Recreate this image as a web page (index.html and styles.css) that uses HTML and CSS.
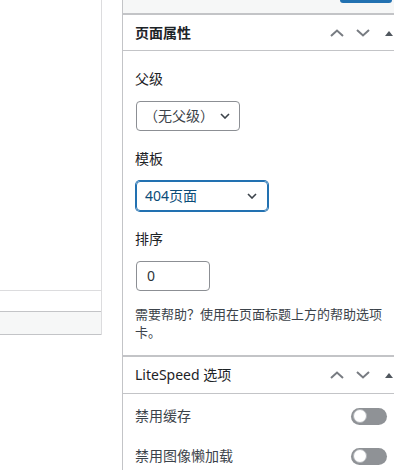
FILE: index.html
```html
<!DOCTYPE html>
<html lang="zh-CN">
<head>
<meta charset="utf-8">
<title>页面属性</title>
<link rel="stylesheet" href="styles.css">
</head>
<body>
<div class="page">
  <div class="editor">
    <div class="editor-main"></div>
    <div class="editor-row"></div>
    <div class="editor-foot"></div>
  </div>
  <div class="gutter"></div>
  <aside class="sidebar">
    <div class="top">
      <span class="publish"></span>
    </div>

    <section class="panel">
      <header class="panel-head">
        <h2 class="panel-title">页面属性</h2>
        <div class="head-tools">
          <span class="tool"><svg width="14" height="8" viewBox="0 0 14 8"><polyline points="1,7 7,1.5 13,7" fill="none" stroke="#787c82" stroke-width="2"/></svg></span>
          <span class="tool"><svg width="14" height="8" viewBox="0 0 14 8"><polyline points="1,1 7,6.5 13,1" fill="none" stroke="#787c82" stroke-width="2"/></svg></span>
          <span class="tool"><svg width="10" height="6" viewBox="0 0 10 6"><polygon points="1,6 5,1 9,6" fill="#50575e"/></svg></span>
        </div>
      </header>
      <div class="panel-body">
        <div class="field">
          <div class="label">父级</div>
          <div class="select select-parent">
            <span class="select-text">（无父级）</span>
            <svg class="chev" width="10" height="6" viewBox="0 0 10 6"><polyline points="1,1 5,5 9,1" fill="none" stroke="#3c434a" stroke-width="1.6"/></svg>
          </div>
        </div>
        <div class="field">
          <div class="label">模板</div>
          <div class="select select-template">
            <span class="select-text">404页面</span>
            <svg class="chev" width="10" height="6" viewBox="0 0 10 6"><polyline points="1,1 5,5 9,1" fill="none" stroke="#3c434a" stroke-width="1.6"/></svg>
          </div>
        </div>
        <div class="field">
          <div class="label">排序</div>
          <div class="input">0</div>
        </div>
        <p class="help">需要帮助？使用在页面标题上方的帮助选项卡。</p>
      </div>
    </section>

    <section class="panel panel-ls">
      <header class="panel-head">
        <h2 class="panel-title">LiteSpeed 选项</h2>
        <div class="head-tools">
          <span class="tool"><svg width="14" height="8" viewBox="0 0 14 8"><polyline points="1,7 7,1.5 13,7" fill="none" stroke="#787c82" stroke-width="2"/></svg></span>
          <span class="tool"><svg width="14" height="8" viewBox="0 0 14 8"><polyline points="1,1 7,6.5 13,1" fill="none" stroke="#787c82" stroke-width="2"/></svg></span>
          <span class="tool"><svg width="10" height="6" viewBox="0 0 10 6"><polygon points="1,6 5,1 9,6" fill="#50575e"/></svg></span>
        </div>
      </header>
      <div class="panel-body rows">
        <div class="row">
          <span class="row-label">禁用缓存</span>
          <span class="toggle"><span class="knob"></span></span>
        </div>
        <div class="row">
          <span class="row-label">禁用图像懒加载</span>
          <span class="toggle"><span class="knob"></span></span>
        </div>
      </div>
    </section>
  </aside>
</div>
</body>
</html>
```

FILE: styles.css
```css
html, body {
  margin: 0;
  padding: 0;
  background: #fff;
}
body {
  width: 394px;
  height: 470px;
  overflow: hidden;
  font-family: "Noto Sans", "Noto Sans CJK SC", sans-serif;
  color: #1d2327;
}
.page {
  display: flex;
  align-items: flex-start;
  width: 394px;
  height: 470px;
}
.editor {
  flex: 0 0 101px;
  border-right: 1px solid #dcdcde;
  display: flex;
  flex-direction: column;
}
.editor-main {
  height: 290px;
  border-bottom: 1px solid #dcdcde;
}
.editor-row {
  height: 20px;
}
.editor-foot {
  height: 22px;
  background: #f6f7f7;
  border-top: 1px solid #c3c4c7;
  border-bottom: 1px solid #c3c4c7;
}
.gutter {
  flex: 0 0 20px;
}
.sidebar {
  flex: 0 0 280px;
  border-left: 1px solid #c3c4c7;
  height: 470px;
  background: #fff;
}
.top {
  height: 13px;
  background: #f6f7f7;
  border-bottom: 2px solid #c3c4c7;
  display: flex;
  justify-content: flex-end;
  align-items: flex-start;
  padding-right: 11px;
}
.publish {
  width: 52px;
  height: 3px;
  background: #2271b1;
  border-radius: 0 0 3px 3px;
}
.panel-head {
  height: 35px;
  border-bottom: 1px solid #c3c4c7;
  display: flex;
  align-items: center;
  padding-left: 12px;
}
.panel-title {
  margin: 0;
  flex: 1;
  font-size: 14px;
  line-height: 20px;
  font-weight: 600;
  color: #1d2327;
}
.head-tools {
  display: flex;
  margin-right: 1px;
}
.tool {
  width: 26px;
  height: 26px;
  display: flex;
  align-items: center;
  justify-content: center;
}
.panel-body {
  padding: 18px 12px 14px;
  border-bottom: 2px solid #c3c4c7;
}
.field + .field {
  margin-top: 18px;
}
.label {
  font-size: 14px;
  line-height: 20px;
  margin-bottom: 12px;
  color: #1d2327;
}
.select {
  box-sizing: border-box;
  height: 30px;
  margin-left: 1px;
  border: 1px solid #8c8f94;
  border-radius: 4px;
  display: flex;
  align-items: center;
  justify-content: space-between;
  font-size: 14px;
  color: #3c434a;
}
.select-parent {
  width: 104px;
  padding: 0 9px 0 7px;
}
.select-template {
  width: 132px;
  border-color: #2271b1;
  box-shadow: 0 0 0 1px #2271b1;
  color: #0a4b78;
  padding: 0 10px 0 8px;
}
.select-text {
  line-height: 20px;
}
.chev {
  display: block;
}
.input {
  box-sizing: border-box;
  width: 74px;
  height: 30px;
  margin-left: 1px;
  border: 1px solid #8c8f94;
  border-radius: 4px;
  padding: 0 10px;
  font-size: 14px;
  line-height: 28px;
  color: #2c3338;
}
.help {
  margin: 14px 0 0;
  width: 255px;
  font-size: 13px;
  line-height: 18px;
  color: #3c434a;
}
.panel-ls .panel-head {
  height: 36px;
}
.panel-ls .panel-title {
  font-weight: 400;
}
.rows {
  padding: 2px 12px 0;
  border-bottom: none;
}
.row {
  height: 40px;
  display: flex;
  align-items: center;
  justify-content: space-between;
}
.row-label {
  font-size: 14px;
  line-height: 20px;
  color: #3c434a;
}
.toggle {
  box-sizing: border-box;
  width: 36px;
  height: 17px;
  margin-right: 4px;
  border-radius: 9px;
  background: #8f9296;
  display: flex;
  align-items: center;
  padding-left: 2px;
}
.knob {
  box-sizing: border-box;
  width: 14px;
  height: 14px;
  border-radius: 50%;
  background: #fff;
  border: 1px solid #b0b3b7;
}
```
